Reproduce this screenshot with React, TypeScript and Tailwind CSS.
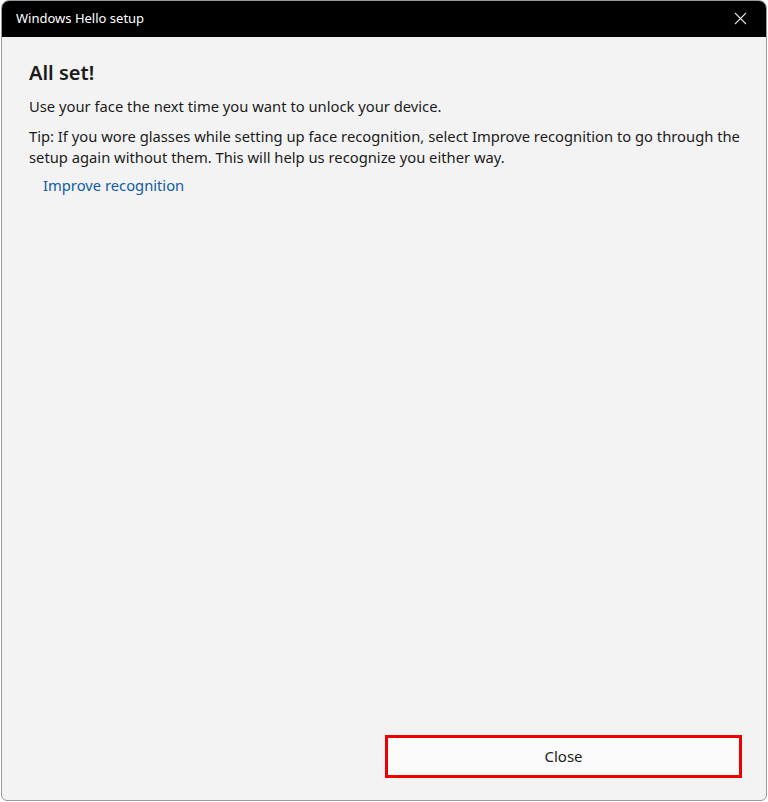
export default function App() {
  return (
    <div
      className="h-[802px] w-[768px] bg-white pl-px pr-[1px]"
      style={{ fontFamily: '"Noto Sans", "Open Sans", sans-serif' }}
    >
      <div className="flex h-[801px] w-[766px] flex-col overflow-hidden rounded-t-[8px] rounded-b-[6px] border border-[#9a9a9a] bg-[#f3f3f3]">
        <div className="flex h-[36px] shrink-0 items-center justify-between bg-black pl-[14px] pr-[19px] text-white">
          <span className="text-[13px]">Windows Hello setup</span>
          <svg width="13" height="13" viewBox="0 0 13 13" className="mt-[-1px]">
            <path d="M1 1 L12 12 M12 1 L1 12" stroke="#e0e0e0" strokeWidth="1.1" />
          </svg>
        </div>
        <div className="flex flex-1 flex-col pl-[27px] pr-[20px] pt-[22px] pb-[23px] text-[#1b1b1b]">
          <h1 className="text-[20px] font-semibold leading-[28px]">All set!</h1>
          <p className="mt-[9px] text-[14.75px] leading-[20px]">
            Use your face the next time you want to unlock your device.
          </p>
          <p className="mt-[10px] text-[14.75px] leading-[21px]">
            Tip: If you wore glasses while setting up face recognition, select Improve recognition to go through the setup again without them. This will help us recognize you either way.
          </p>
          <a className="ml-[14px] mt-[7px] self-start text-[14.75px] leading-[20px] text-[#0f5ba7]">
            Improve recognition
          </a>
          <div className="mt-auto flex justify-end">
            <button className="mr-[4px] mb-[-1px] h-[43px] w-[357px] border-[3px] border-[#ee0000] bg-[#fbfbfb] text-[15px] text-[#1b1b1b]">
              Close
            </button>
          </div>
        </div>
      </div>
    </div>
  );
}
